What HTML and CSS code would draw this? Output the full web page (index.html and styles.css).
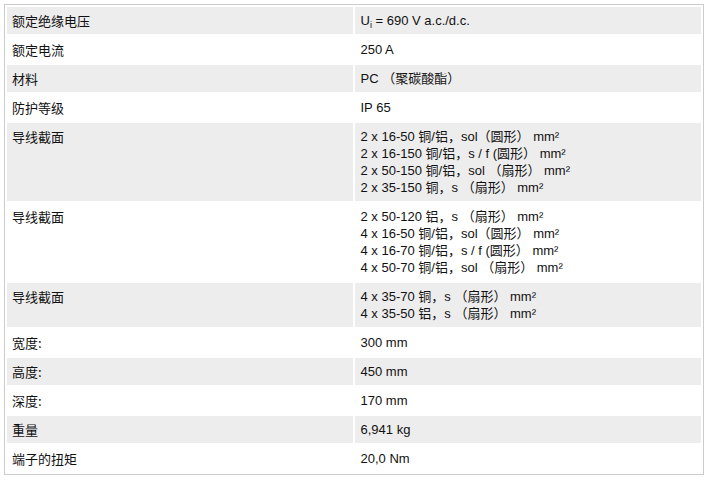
FILE: index.html
```html
<!DOCTYPE html>
<html lang="zh">
<head>
<meta charset="utf-8">
<link rel="stylesheet" href="styles.css">
</head>
<body>
<table class="specs">
  <tr class="odd"><td class="label">额定绝缘电压</td><td class="value">U<sub>i</sub> = 690 V a.c./d.c.</td></tr>
  <tr><td class="label">额定电流</td><td class="value">250 A</td></tr>
  <tr class="odd"><td class="label">材料</td><td class="value">PC （聚碳酸酯）</td></tr>
  <tr><td class="label">防护等级</td><td class="value">IP 65</td></tr>
  <tr class="odd"><td class="label">导线截面</td><td class="value">2 x 16-50 铜/铝，sol（圆形） mm²<br>2 x 16-150 铜/铝，s / f (圆形） mm²<br>2 x 50-150 铜/铝，sol （扇形） mm²<br>2 x 35-150 铜，s （扇形） mm²</td></tr>
  <tr><td class="label">导线截面</td><td class="value">2 x 50-120 铝，s （扇形） mm²<br>4 x 16-50 铜/铝，sol（圆形） mm²<br>4 x 16-70 铜/铝，s / f (圆形） mm²<br>4 x 50-70 铜/铝，sol （扇形） mm²</td></tr>
  <tr class="odd"><td class="label">导线截面</td><td class="value">4 x 35-70 铜，s （扇形） mm²<br>4 x 35-50 铝，s （扇形） mm²</td></tr>
  <tr><td class="label">宽度:</td><td class="value">300 mm</td></tr>
  <tr class="odd"><td class="label">高度:</td><td class="value">450 mm</td></tr>
  <tr><td class="label">深度:</td><td class="value">170 mm</td></tr>
  <tr class="odd"><td class="label">重量</td><td class="value">6,941 kg</td></tr>
  <tr><td class="label">端子的扭矩</td><td class="value">20,0 Nm</td></tr>
</table>
</body>
</html>
```
FILE: styles.css
```css
body {
  margin: 4px;
  background: #fff;
  font-family: "Liberation Sans", "Noto Sans CJK SC", sans-serif;
  font-size: 13px;
  color: #111;
}
.specs {
  width: 700px;
  border: 1px solid #ccc;
  border-spacing: 2px;
  table-layout: fixed;
}
.specs td {
  width: 50%;
  padding: 5px 5px 5px 5px;
  line-height: 17px;
  vertical-align: top;
  background: #fff;
}
.specs tr.odd td {
  background: #ededed;
}
.label {
  font-family: "Noto Sans CJK SC", sans-serif;
}
.value {
  padding-left: 6px !important;
}
.value sub {
  font-size: 9px;
  line-height: 0;
  vertical-align: -3px;
}
```
